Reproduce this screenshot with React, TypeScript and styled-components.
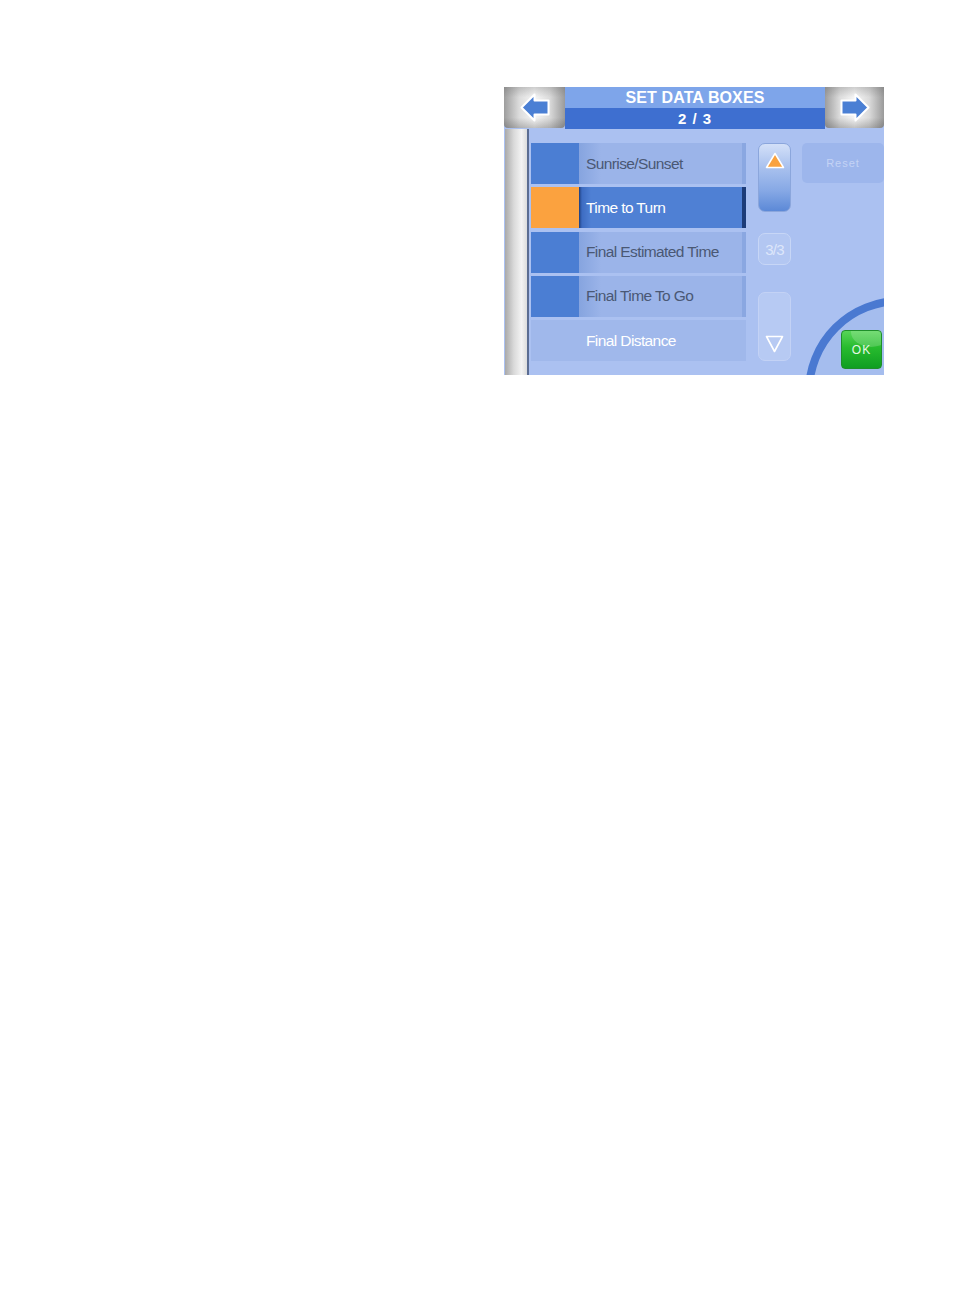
import React from 'react';
import styled, { createGlobalStyle } from 'styled-components';

// --- Data ---
const dataBoxes = [
  { label: 'Sunrise/Sunset', swatch: 'blue' },
  { label: 'Time to Turn', swatch: 'orange', selected: true },
  { label: 'Final Estimated Time', swatch: 'blue' },
  { label: 'Final Time To Go', swatch: 'blue' },
  { label: 'Final Distance' },
];

// --- Styled Components ---
const GlobalStyle = createGlobalStyle`
  html, body {
    margin: 0;
    padding: 0;
    background: #fff;
  }
`;

const Page = styled.div`
  min-height: 1305px;
  padding: 87px 0 0 504px;
  box-sizing: border-box;
  font-family: 'Liberation Sans', Arial, sans-serif;
`;

const Panel = styled.div`
  width: 380px;
  height: 288px;
  display: flex;
  flex-direction: column;
  background: #abc1f1;
  overflow: hidden;
`;

const Header = styled.div`
  height: 42px;
  display: flex;
  flex-shrink: 0;
`;

const NavButton = styled.button<{ $width: number }>`
  width: ${p => p.$width}px;
  height: 41px;
  padding: 0;
  border: none;
  border-radius: 0 0 4px 4px;
  display: flex;
  align-items: center;
  justify-content: center;
  background:
    linear-gradient(to bottom, rgba(90, 90, 90, 0.25) 0%, rgba(255, 255, 255, 0) 25%, rgba(255, 255, 255, 0) 75%, rgba(70, 70, 70, 0.3) 100%),
    linear-gradient(to right, #9d9d9d 0%, #dcdcdc 25%, #f6f6f6 50%, #dadada 75%, #9a9a9a 100%);
  cursor: pointer;
`;

const TitleBlock = styled.div`
  flex: 1;
  display: flex;
  flex-direction: column;
`;

const TitleBand = styled.div<{ $dark?: boolean }>`
  height: 21px;
  display: flex;
  align-items: center;
  justify-content: center;
  background: ${p => (p.$dark ? '#3e6fd0' : '#7ea5ea')};
  color: #fff;
  font-weight: 700;
  font-size: ${p => (p.$dark ? '15px' : '16px')};
  letter-spacing: ${p => (p.$dark ? '1px' : '0.1px')};
`;

const Body = styled.div`
  position: relative;
  flex: 1;
  display: flex;
`;

const SideStrip = styled.div`
  width: 22px;
  margin-left: 1px;
  flex-shrink: 0;
  background: linear-gradient(to right, #a9a9a9 0%, #d9d9d9 40%, #f3f3f3 75%, #dcdcdc 100%);
  border-right: 2px solid #5b6d92;
`;

const Content = styled.div`
  flex: 1;
  display: flex;
  padding: 14px 1px 14px 2px;
  position: relative;
  z-index: 1;
`;

const RowList = styled.div`
  width: 215px;
  display: flex;
  flex-direction: column;
  gap: 3.25px;
`;

const Row = styled.div<{ $plain?: boolean }>`
  height: 41px;
  display: flex;
  background: ${p => (p.$plain ? '#a0b8eb' : 'transparent')};
`;

const Swatch = styled.div<{ $color: string }>`
  width: 48px;
  flex-shrink: 0;
  background: ${p => (p.$color === 'orange' ? '#fba23f' : '#4b7ed3')};
`;

const RowText = styled.div<{ $selected?: boolean; $plain?: boolean }>`
  flex: 1;
  display: flex;
  align-items: center;
  padding-left: ${p => (p.$plain ? '55px' : '7px')};
  font-size: 15.5px;
  letter-spacing: -0.6px;
  color: ${p => (p.$selected || p.$plain ? '#ffffff' : '#4a5874')};
  background: ${p =>
    p.$plain
      ? 'transparent'
      : p.$selected
      ? 'linear-gradient(to right, #1f3f7e 0, #3d6cc2 3px, #4f80d4 12px)'
      : 'linear-gradient(to right, #86a4df 0, #9bb4e9 22px)'};
  border-right: 4px solid ${p => (p.$selected ? '#1d3c78' : p.$plain ? 'transparent' : '#8aa7e1')};
`;

const ScrollColumn = styled.div`
  width: 33px;
  margin-left: 12px;
  display: flex;
  flex-direction: column;
  align-items: stretch;
`;

const ScrollButton = styled.div<{ $active?: boolean }>`
  height: 69px;
  box-sizing: border-box;
  border-radius: 7px;
  display: flex;
  flex-direction: column;
  align-items: center;
  justify-content: ${p => (p.$active ? 'flex-start' : 'flex-end')};
  padding: ${p => (p.$active ? '8px 0 0' : '0 0 7px')};
  border: 1px solid ${p => (p.$active ? '#8ba6dc' : '#c3d2f5')};
  background: ${p =>
    p.$active
      ? 'linear-gradient(to bottom, #d3e0f8 0%, #a9c1ee 35%, #86a8e5 70%, #5c89d7 100%)'
      : '#b7caf3'};
`;

const PageCount = styled.div`
  height: 32px;
  margin: 21px 0 27px;
  box-sizing: border-box;
  border-radius: 7px;
  border: 1px solid #c7d6f6;
  background: #b3c7f2;
  display: flex;
  align-items: center;
  justify-content: center;
  color: #dde6fa;
  font-size: 15px;
  letter-spacing: -0.8px;
`;

const SideColumn = styled.div`
  width: 82px;
  margin-left: 11px;
  margin-bottom: -8px;
  display: flex;
  flex-direction: column;
  justify-content: space-between;
  align-items: flex-end;
`;

const ResetButton = styled.div`
  width: 82px;
  height: 40px;
  border-radius: 5px;
  background: #9db6ec;
  display: flex;
  align-items: center;
  justify-content: center;
  color: #c4d3f5;
  font-size: 11px;
  letter-spacing: 1px;
`;

const OkButton = styled.div`
  position: relative;
  width: 41px;
  height: 39px;
  margin-right: 2px;
  border-radius: 4px;
  background: linear-gradient(to bottom, #57d557 0%, #27bb2e 45%, #0f9e22 100%);
  border: 1px solid #1f8f2a;
  box-sizing: border-box;
  display: flex;
  align-items: center;
  justify-content: center;
  color: #e6f8e6;
  font-size: 12px;
  letter-spacing: 1px;
  overflow: hidden;

  &::after {
    content: '';
    position: absolute;
    right: -10px;
    top: -14px;
    width: 40px;
    height: 30px;
    border-radius: 50%;
    background: rgba(255, 255, 255, 0.18);
  }
`;

// decorative dial ring sitting behind the OK button
const Ring = styled.div`
  position: absolute;
  left: 301px;
  top: 168px;
  width: 190px;
  height: 190px;
  box-sizing: border-box;
  border-radius: 50%;
  border: 8px solid #4a79d1;
  background: #a5bdee;
  z-index: 0;
`;

const ArrowIcon: React.FC<{ dir: 'left' | 'right' }> = ({ dir }) => (
  <svg width="30" height="29" viewBox="0 0 30 29">
    <path
      d="M1.5 14.5 L14.5 1.5 L14.5 7.5 L28.5 7.5 L28.5 21.5 L14.5 21.5 L14.5 27.5 Z"
      fill="#4a7fd4"
      stroke="#ffffff"
      strokeWidth="2"
      strokeLinejoin="round"
      transform={dir === 'right' ? 'translate(30 0) scale(-1 1)' : undefined}
    />
  </svg>
);

const UpTriangle = () => (
  <svg width="20" height="17" viewBox="0 0 20 17">
    <path d="M10 1.5 L18.5 15.5 L1.5 15.5 Z" fill="#f9a23f" stroke="#ffffff" strokeWidth="1.5" strokeLinejoin="round" />
  </svg>
);

const DownTriangle = () => (
  <svg width="19" height="18" viewBox="0 0 19 18">
    <path d="M1.5 1.5 L17.5 1.5 L9.5 16.5 Z" fill="none" stroke="#ffffff" strokeWidth="1.6" strokeLinejoin="round" />
  </svg>
);

export default function App() {
  return (
    <Page>
      <GlobalStyle />
      <Panel>
        <Header>
          <NavButton $width={61}>
            <ArrowIcon dir="left" />
          </NavButton>
          <TitleBlock>
            <TitleBand>SET DATA BOXES</TitleBand>
            <TitleBand $dark>2 / 3</TitleBand>
          </TitleBlock>
          <NavButton $width={59}>
            <ArrowIcon dir="right" />
          </NavButton>
        </Header>
        <Body>
          <SideStrip />
          <Ring />
          <Content>
            <RowList>
              {dataBoxes.map((box, i) => (
                <Row key={i} $plain={!box.swatch}>
                  {box.swatch && <Swatch $color={box.swatch} />}
                  <RowText $selected={box.selected} $plain={!box.swatch}>
                    {box.label}
                  </RowText>
                </Row>
              ))}
            </RowList>
            <ScrollColumn>
              <ScrollButton $active>
                <UpTriangle />
              </ScrollButton>
              <PageCount>3/3</PageCount>
              <ScrollButton>
                <DownTriangle />
              </ScrollButton>
            </ScrollColumn>
            <SideColumn>
              <ResetButton>Reset</ResetButton>
              <OkButton>OK</OkButton>
            </SideColumn>
          </Content>
        </Body>
      </Panel>
    </Page>
  );
}
